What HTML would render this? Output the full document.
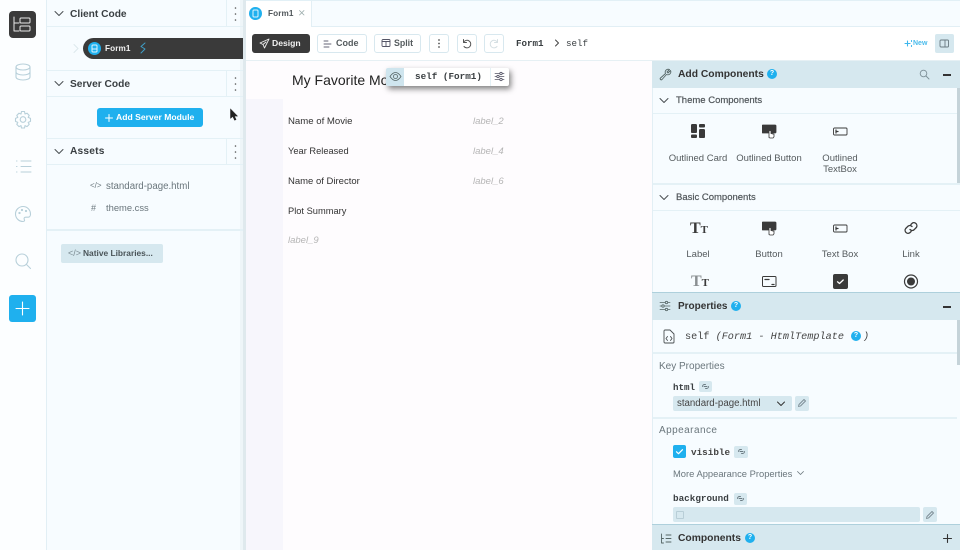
<!DOCTYPE html>
<html><head><meta charset="utf-8">
<style>
html,body{margin:0;padding:0;width:960px;height:550px;overflow:hidden;background:#fff}
body{position:relative;font-family:"Liberation Sans",sans-serif;color:#3a3f42}
.a{position:absolute}
.t{position:absolute;white-space:nowrap;line-height:1}
.b{font-weight:bold}
.m{font-family:"Liberation Mono",monospace}
.r{background:#e4f1f6}
svg{position:absolute;fill:none;stroke-linecap:round;stroke-linejoin:round}
.btn{position:absolute;box-sizing:border-box;border:1.5px solid #d8e8ef;border-radius:3px;background:#fff;height:19px;top:34px}
.ctr{text-align:center;transform:translateX(-50%)}
</style></head><body>

<!-- top line -->
<div class="a" style="left:0;top:0;width:960px;height:1px;background:#e2f0f6"></div>

<!-- left rail -->
<div class="a" style="left:0;top:0;width:46px;height:550px;background:#fcfeff;border-right:1px solid #e2eff5"></div>
<div class="a" style="left:9px;top:11px;width:27px;height:27px;background:#3a3a3a;border-radius:4px"></div>
<svg style="left:9px;top:11px" width="27" height="27" stroke="#e8e8e8" stroke-width="1"><path d="M5 6v14h5M5 12h5"/><rect x="11" y="7" width="10" height="5" rx="1"/><rect x="11" y="15" width="10" height="5" rx="1"/></svg>
<svg style="left:13px;top:62px" width="20" height="20" stroke="#b8d0da" stroke-width="1.100"><ellipse cx="10" cy="5" rx="7" ry="3"/><path d="M3 5v10c0 1.700 3 3 7 3s7-1.300 7-3V5M3 10c0 1.700 3 3 7 3s7-1.300 7-3"/></svg>
<svg style="left:14px;top:110px" width="18" height="19" stroke="#b8d0da" stroke-width="1.100"><circle cx="9" cy="9.500" r="2.800"/><path d="M7.500 1.500h3l.5 2.500 2-.8 2.200 2.200-1 2 2.300 1v3l-2.300 1 1 2-2.200 2.200-2-1-.5 2.400h-3l-.5-2.400-2 1-2.200-2.200 1-2-2.300-1v-3l2.300-1-1-2 2.200-2.200 2 .8z"/></svg>
<svg style="left:15px;top:159px" width="17" height="15" stroke="#b8d0da" stroke-width="1"><path d="M6 2h10M6 7.500h10M6 13h10M1.500 2h.5M1.500 7.500h.5M1.500 13h.5"/></svg>
<svg style="left:14px;top:205px" width="18" height="18" stroke="#b8d0da" stroke-width="1.100"><path d="M9 1.500a7.500 7.500 0 1 0 0 15c1.500 0 1.800-1 1.300-2-.6-1.200 0-2.300 1.400-2.300h2.300c1.300 0 2.500-1 2.500-3C16.500 4.500 13 1.500 9 1.500z"/><circle cx="5.500" cy="8" r=".6"/><circle cx="8" cy="5" r=".6"/><circle cx="12" cy="6" r=".6"/></svg>
<svg style="left:14px;top:252px" width="18" height="18" stroke="#b8d0da" stroke-width="1.100"><circle cx="8" cy="8" r="6"/><path d="M12.500 12.500l4 4"/></svg>
<div class="a" style="left:9px;top:295px;width:27px;height:27px;background:#1fb0ee;border-radius:3px"></div>
<svg style="left:9px;top:295px" width="27" height="27" stroke="#fff" stroke-width="1.100"><path d="M13.500 7v13M7 13.500h13"/></svg>

<!-- left panel -->
<div class="a" style="left:47px;top:0;width:196px;height:550px;background:#f7fcff"></div>
<div class="a" style="left:243px;top:0;width:3px;height:550px;background:#dfe9ed"></div>
<div class="a" style="left:240px;top:0;width:3px;height:550px;background:#eef5f8"></div>

<div class="a r" style="left:47px;top:26px;width:196px;height:1px"></div>
<div class="a r" style="left:47px;top:70px;width:196px;height:1px"></div>
<div class="a r" style="left:47px;top:96px;width:196px;height:1px"></div>
<div class="a r" style="left:47px;top:138px;width:196px;height:1px"></div>
<div class="a r" style="left:47px;top:164px;width:196px;height:1px"></div>
<div class="a" style="left:47px;top:229px;width:196px;height:2px;background:#e4f1f6"></div>
<div class="a r" style="left:226px;top:0;width:1px;height:26px"></div>
<div class="a r" style="left:226px;top:71px;width:1px;height:25px"></div>
<div class="a r" style="left:226px;top:139px;width:1px;height:25px"></div>

<svg style="left:53px;top:9px" width="12" height="9" stroke="#4a4f52" stroke-width="1"><path d="M2 2.500l4 4 4-4"/></svg>
<svg style="left:53px;top:79px" width="12" height="9" stroke="#4a4f52" stroke-width="1"><path d="M2 2.500l4 4 4-4"/></svg>
<svg style="left:53px;top:147px" width="12" height="9" stroke="#4a4f52" stroke-width="1"><path d="M2 2.500l4 4 4-4"/></svg>
<div class="t b" style="left:70px;top:10px;font-size:10.200px">Client Code</div>
<div class="t b" style="left:70px;top:80px;font-size:10.200px">Server Code</div>
<div class="t b" style="left:70px;top:147px;font-size:10.200px;letter-spacing:.2px">Assets</div>
<svg style="left:233px;top:6px" width="5" height="16"><circle cx="2.500" cy="2" r=".8" fill="#555"/><circle cx="2.500" cy="8" r=".8" fill="#555"/><circle cx="2.500" cy="14" r=".8" fill="#555"/></svg>
<svg style="left:233px;top:76px" width="5" height="16"><circle cx="2.500" cy="2" r=".8" fill="#555"/><circle cx="2.500" cy="8" r=".8" fill="#555"/><circle cx="2.500" cy="14" r=".8" fill="#555"/></svg>
<svg style="left:233px;top:144px" width="5" height="16"><circle cx="2.500" cy="2" r=".8" fill="#555"/><circle cx="2.500" cy="8" r=".8" fill="#555"/><circle cx="2.500" cy="14" r=".8" fill="#555"/></svg>

<svg style="left:72px;top:43px" width="8" height="11" stroke="#dde8ec" stroke-width="1"><path d="M2 1.500l4 4-4 4"/></svg>
<div class="a" style="left:83px;top:38px;width:160px;height:21px;background:#3a3a3a;border-radius:11px 0 0 11px"></div>
<div class="a" style="left:88px;top:42px;width:13px;height:13px;background:#1fb0ee;border-radius:50%"></div>
<svg style="left:88px;top:42px" width="13" height="13" stroke="#dff4fd" stroke-width="1"><rect x="4" y="3" width="5" height="7" rx="1"/><path d="M4 7h5"/></svg>
<div class="t b" style="left:105px;top:45px;font-size:8.200px;color:#f2f2f2;letter-spacing:.1px">Form1</div>
<svg style="left:139px;top:42px" width="8" height="12" stroke="#3f9fc8" stroke-width="1"><path d="M6 1L2 4.500 6 7 2 11"/></svg>

<div class="a" style="left:97px;top:108px;width:106px;height:19px;background:#1fb0ee;border-radius:3px"></div>
<svg style="left:104px;top:113px" width="10" height="10" stroke="#fff" stroke-width="1"><path d="M5 1.500v7M1.500 5h7"/></svg>
<div class="t b" style="left:116px;top:113px;font-size:8.600px;color:#fff">Add Server Module</div>
<svg style="left:229px;top:108px" width="10" height="14"><path d="M1.500 1v9.500l2.300-2 1.800 3.800 1.500-.7-1.700-3.500h3z" fill="#222" stroke="#222" stroke-width=".5"/></svg>

<div class="t" style="left:90px;top:182px;font-size:8px;color:#6d7a80">&lt;/&gt;</div>
<div class="t" style="left:106px;top:182px;font-size:9.700px;color:#6a767c">standard-page.html</div>
<div class="t" style="left:91px;top:204px;font-size:9px;color:#6d7a80">#</div>
<div class="t" style="left:106px;top:203px;font-size:9.400px;color:#6a767c">theme.css</div>
<div class="a" style="left:61px;top:244px;width:102px;height:19px;background:#d6e8ef;border-radius:2px"></div>
<div class="t" style="left:68px;top:249px;font-size:9px;color:#7b8b92">&lt;/&gt;</div>
<div class="t b" style="left:83px;top:249px;font-size:8.400px;color:#4a5458">Native Libraries...</div>

<!-- tabs -->
<div class="a" style="left:246px;top:1px;width:714px;height:25px;background:#f7fcff"></div>
<div class="a" style="left:246px;top:26px;width:714px;height:1px;background:#e2eff5"></div>
<div class="a" style="left:246px;top:1px;width:66px;height:26px;background:#fff;border-right:1px solid #e2eff5;box-sizing:border-box"></div>
<div class="a" style="left:249px;top:7px;width:13px;height:13px;background:#1fb0ee;border-radius:50%"></div>
<svg style="left:249px;top:7px" width="13" height="13" stroke="#dff4fd" stroke-width="1"><rect x="4" y="3" width="5" height="7" rx="1"/></svg>
<div class="t b" style="left:268px;top:10px;font-size:8.200px;color:#50565a;letter-spacing:.1px">Form1</div>
<svg style="left:298px;top:9px" width="8" height="8" stroke="#9aa" stroke-width=".8"><path d="M1.500 1.500l4.500 4.500M6 1.500L1.500 6"/></svg>

<!-- toolbar -->
<div class="a" style="left:246px;top:27px;width:714px;height:33px;background:#fff"></div>
<div class="a" style="left:246px;top:60px;width:714px;height:1px;background:#e6f0f4"></div>
<div class="a" style="left:252px;top:34px;width:58px;height:19px;background:#3a3a3a;border-radius:3px"></div>
<svg style="left:259px;top:38px" width="11" height="11" stroke="#eee" stroke-width=".9"><path d="M10 1L1 5l3 1.500L5.500 10 10 1zM4 6.500L7 4"/></svg>
<div class="t b" style="left:272px;top:39px;font-size:8.600px;color:#f2f2f2">Design</div>
<div class="btn" style="left:317px;width:50px"></div>
<svg style="left:323px;top:39px" width="10" height="10" stroke="#667" stroke-width=".9"><path d="M1 2h4M1 5h7M1 8h5"/></svg>
<div class="t b" style="left:336px;top:39px;font-size:9px;color:#555b5e">Code</div>
<div class="btn" style="left:374px;width:47px"></div>
<svg style="left:381px;top:38px" width="10" height="10" stroke="#556" stroke-width=".9"><rect x="1" y="1.500" width="8" height="7" rx="1"/><path d="M1 3.500h8M5 3.500v5"/></svg>
<div class="t b" style="left:394px;top:39px;font-size:8.800px;color:#555b5e">Split</div>
<div class="btn" style="left:429px;width:20px"></div>
<svg style="left:437px;top:38px" width="4" height="11"><circle cx="2" cy="2" r=".9" fill="#555"/><circle cx="2" cy="5.500" r=".9" fill="#555"/><circle cx="2" cy="9" r=".9" fill="#555"/></svg>
<div class="btn" style="left:457px;width:20px"></div>
<svg style="left:461px;top:38px" width="11" height="11" stroke="#555" stroke-width="1"><path d="M2.500 1.500v3h3M2.500 4.500A3.800 3.800 0 1 1 3 8.500"/></svg>
<div class="btn" style="left:484px;width:20px"></div>
<svg style="left:489px;top:38px" width="11" height="11" stroke="#d5dfe3" stroke-width="1"><path d="M8.500 1.500v3h-3M8.500 4.500A3.800 3.800 0 1 0 8 8.500"/></svg>
<div class="t m b" style="left:516px;top:39px;font-size:9.200px;color:#3a3f42">Form1</div>
<svg style="left:554px;top:39px" width="6" height="8" stroke="#444" stroke-width="1"><path d="M1.500 1l3 3-3 3"/></svg>
<div class="t m" style="left:566px;top:39px;font-size:9.200px;color:#3a3f42">self</div>
<svg style="left:904px;top:39px" width="9" height="9" stroke="#3db6ec" stroke-width="1.100"><path d="M1 4.500h5M3.500 2v5M7.500 1.500v1M7.500 6.500v1"/></svg>
<div class="t b" style="left:913px;top:40px;font-size:7px;color:#4bbcec">New</div>
<div class="a" style="left:935px;top:34px;width:19px;height:19px;background:#d6e8ef;border-radius:2px"></div>
<svg style="left:939px;top:39px" width="11" height="9" stroke="#6a7a82" stroke-width=".9"><rect x="1" y="1" width="8.500" height="7" rx="1"/><path d="M6 1v7"/></svg>

<!-- canvas -->
<div class="a" style="left:246px;top:61px;width:406px;height:489px;background:#fefcfe"></div>
<div class="a" style="left:246px;top:99px;width:37px;height:451px;background:#f7f6fc"></div>
<div class="t" style="left:292px;top:73px;font-size:14px;color:#222">My Favorite Mov</div>
<div class="t" style="left:288px;top:117px;font-size:9.600px;color:#333">Name of Movie</div>
<div class="t" style="left:288px;top:147px;font-size:9.300px;color:#333">Year Released</div>
<div class="t" style="left:288px;top:177px;font-size:9.500px;color:#333">Name of Director</div>
<div class="t" style="left:288px;top:207px;font-size:9.300px;color:#333">Plot Summary</div>
<div class="t" style="left:473px;top:117px;font-size:9.500px;font-style:italic;color:#b5b5b5">label_2</div>
<div class="t" style="left:473px;top:147px;font-size:9.500px;font-style:italic;color:#b5b5b5">label_4</div>
<div class="t" style="left:473px;top:177px;font-size:9.500px;font-style:italic;color:#b5b5b5">label_6</div>
<div class="t" style="left:288px;top:236px;font-size:9.500px;font-style:italic;color:#b5b5b5">label_9</div>

<!-- floating toolbar -->
<div class="a" style="left:386px;top:68px;width:123px;height:18px;background:#fff;border-radius:2px;box-shadow:2px 3px 6px rgba(50,50,50,.6)"></div>
<div class="a" style="left:386px;top:68px;width:18px;height:18px;background:#cfe5ee;border-radius:2px 0 0 2px"></div>
<svg style="left:389px;top:71px" width="13" height="11" stroke="#566" stroke-width=".8"><path d="M1 5.500C3 2.500 5 1.500 6.500 1.500S10 2.500 12 5.500C10 8.500 8 9.500 6.500 9.500S3 8.500 1 5.500z"/><circle cx="6.500" cy="5.500" r="2"/></svg>
<div class="t m b" style="left:415px;top:72px;font-size:9.300px;color:#3a3f42">self (Form1)</div>
<div class="a" style="left:490px;top:68px;width:1px;height:18px;background:#e4f1f6"></div>
<svg style="left:494px;top:71px" width="11" height="11" stroke="#556" stroke-width=".8"><path d="M1 2.500h9M1 5.500h9M1 8.500h9"/><circle cx="7" cy="2.500" r="1.200" fill="#fff"/><circle cx="4" cy="5.500" r="1.200" fill="#fff"/><circle cx="7" cy="8.500" r="1.200" fill="#fff"/></svg>

<!-- right panel -->
<div class="a" style="left:652px;top:61px;width:308px;height:489px;background:#f7fcff;border-left:1px solid #e2eff5;box-sizing:border-box"></div>
<div class="a" style="left:652px;top:61px;width:308px;height:27px;background:#d6e8ef"></div>
<svg style="left:659px;top:68px" width="13" height="13" stroke="#566" stroke-width=".9"><path d="M11.500 2.500L9 5 8 4l2.500-2.500a3 3 0 0 0-4 4L1.500 10a1 1 0 0 0 1.500 1.500l4.500-5a3 3 0 0 0 4-4z"/></svg>
<div class="t b" style="left:678px;top:70px;font-size:10.300px;color:#333">Add Components</div>
<div class="a" style="left:767px;top:69px;width:10px;height:10px;border-radius:50%;background:#1fb0ee;color:#fff;font-size:7px;font-weight:bold;line-height:10px;text-align:center">?</div>
<svg style="left:919px;top:69px" width="11" height="11" stroke="#7d8f97" stroke-width=".9"><circle cx="4.500" cy="4.500" r="3.300"/><path d="M7 7l3 3"/></svg>
<div class="a" style="left:943px;top:74px;width:8px;height:1.500px;background:#333"></div>

<svg style="left:658px;top:96px" width="12" height="9" stroke="#4a4f52" stroke-width="1"><path d="M2 2.500l4 4 4-4"/></svg>
<div class="t" style="left:676px;top:96px;font-size:9.500px;color:#50565a;-webkit-text-stroke:.2px #50565a">Theme Components</div>
<div class="a r" style="left:653px;top:113px;width:304px;height:1px"></div>
<div class="a" style="left:957px;top:88px;width:3px;height:95px;background:#c5d3d9"></div>

<!-- theme comps -->
<svg style="left:691px;top:123px" width="15" height="16"><rect x="0" y="1" width="6" height="9" rx="1.300" fill="#3a3a3a"/><rect x="0" y="11.500" width="6" height="3.500" rx="1" fill="#3a3a3a"/><rect x="8" y="1" width="6" height="3.500" rx="1" fill="#3a3a3a"/><rect x="8" y="6" width="6" height="9" rx="1.300" fill="#3a3a3a"/></svg>
<svg style="left:762px;top:124px" width="15" height="15" stroke="#3a3a3a" stroke-width=".8"><rect x="0" y="1" width="14" height="8" rx="1" fill="#3a3a3a"/><path d="M7 13.500V7.500a1 1 0 0 1 2 0v2l3 .7v2.500l-1 1.300H8z" fill="#fff"/></svg>
<svg style="left:833px;top:125px" width="15" height="13" stroke="#3a3a3a" stroke-width=".9"><rect x=".5" y="3" width="13.500" height="7" rx="1"/><path d="M3 5v3M3 6.500h2" stroke-width="1.200"/></svg>
<div class="t ctr" style="left:698px;top:154px;font-size:9.500px;color:#555b5e">Outlined Card</div>
<div class="t ctr" style="left:769px;top:154px;font-size:9.500px;color:#555b5e">Outlined Button</div>
<div class="t ctr" style="left:840px;top:154px;font-size:9.500px;color:#555b5e">Outlined</div>
<div class="t ctr" style="left:840px;top:165px;font-size:9.500px;color:#555b5e">TextBox</div>

<div class="a r" style="left:653px;top:183px;width:307px;height:2px"></div>
<svg style="left:658px;top:193px" width="12" height="9" stroke="#4a4f52" stroke-width="1"><path d="M2 2.500l4 4 4-4"/></svg>
<div class="t" style="left:676px;top:193px;font-size:9.500px;color:#50565a;-webkit-text-stroke:.2px #50565a">Basic Components</div>
<div class="a r" style="left:653px;top:210px;width:307px;height:1px"></div>

<div class="t" style="left:690px;top:221px;font-family:'Liberation Serif',serif;font-size:16px;font-weight:bold;color:#3a3a3a">T<span style="font-size:11px">T</span></div>
<svg style="left:762px;top:221px" width="15" height="15" stroke="#3a3a3a" stroke-width=".8"><rect x="0" y="1" width="14" height="8" rx="1" fill="#3a3a3a"/><path d="M7 13.500V7.500a1 1 0 0 1 2 0v2l3 .7v2.500l-1 1.300H8z" fill="#fff"/></svg>
<svg style="left:833px;top:222px" width="15" height="13" stroke="#3a3a3a" stroke-width=".9"><rect x=".5" y="3" width="13.500" height="7" rx="1"/><path d="M3 5v3M3 6.500h2" stroke-width="1.200"/></svg>
<svg style="left:903px;top:221px" width="16" height="14" stroke="#3a3a3a" stroke-width="1.300"><path d="M7 8.500a3 3 0 0 0 4 .3l2.300-2.300a3 3 0 0 0-4.200-4.200l-1.200 1.200M9 5.500a3 3 0 0 0-4-.3L2.700 7.500a3 3 0 0 0 4.200 4.200l1.200-1.200"/></svg>
<div class="t ctr" style="left:698px;top:250px;font-size:9.500px;color:#555b5e">Label</div>
<div class="t ctr" style="left:769px;top:250px;font-size:9.500px;color:#555b5e">Button</div>
<div class="t ctr" style="left:840px;top:250px;font-size:9.500px;color:#555b5e">Text Box</div>
<div class="t ctr" style="left:911px;top:250px;font-size:9.500px;color:#555b5e">Link</div>

<div class="t" style="left:691px;top:274px;font-family:'Liberation Serif',serif;font-size:16px;font-weight:bold;color:#8a8f92">T<span style="font-size:11px;color:#3a3a3a">T</span></div>
<svg style="left:762px;top:275px" width="15" height="14" stroke="#3a3a3a" stroke-width="1"><rect x=".5" y="1.500" width="13.500" height="10" rx="1"/><path d="M3 4.500h4M10 9.500h2" stroke-width="1.300"/></svg>
<div class="a" style="left:833px;top:274px;width:15px;height:15px;background:#3a3a3a;border-radius:2px"></div>
<svg style="left:833px;top:274px" width="15" height="15" stroke="#fff" stroke-width="1.300"><path d="M4.500 7.800l2 1.700 3.700-3.500"/></svg>
<svg style="left:903px;top:274px" width="16" height="16" stroke="#3a3a3a" stroke-width="1.200"><circle cx="8" cy="7.500" r="6.500"/><circle cx="8" cy="7.500" r="3.400" fill="#3a3a3a"/></svg>

<!-- properties -->
<div class="a" style="left:652px;top:292px;width:308px;height:28px;background:#d6e8ef;border-top:1px solid #aed0dc;box-sizing:border-box"></div>
<svg style="left:659px;top:300px" width="13" height="12" stroke="#566" stroke-width=".8"><path d="M1 2.500h10M1 6h10M1 9.500h10"/><circle cx="7.500" cy="2.500" r="1.200" fill="#d6e8ef"/><circle cx="4" cy="6" r="1.200" fill="#d6e8ef"/><circle cx="7.500" cy="9.500" r="1.200" fill="#d6e8ef"/></svg>
<div class="t b" style="left:678px;top:302px;font-size:10px;color:#333">Properties</div>
<div class="a" style="left:731px;top:301px;width:10px;height:10px;border-radius:50%;background:#1fb0ee;color:#fff;font-size:7px;font-weight:bold;line-height:10px;text-align:center">?</div>
<div class="a" style="left:943px;top:306px;width:8px;height:1.500px;background:#333"></div>

<svg style="left:663px;top:329px" width="12" height="15" stroke="#4a4f52" stroke-width=".9"><path d="M1 2a1 1 0 0 1 1-1h5l4 4v8a1 1 0 0 1-1 1H2a1 1 0 0 1-1-1z"/><path d="M4.500 7.500L3 9.500l1.500 2M7.500 7.500L9 9.500l-1.500 2"/></svg>
<div class="t m" style="left:685px;top:333px;font-size:10.200px;color:#444">self <i>(Form1 - HtmlTemplate</i></div>
<div class="a" style="left:851px;top:331px;width:10px;height:10px;border-radius:50%;background:#1fb0ee;color:#fff;font-size:7px;font-weight:bold;line-height:10px;text-align:center">?</div>
<div class="t m" style="left:863px;top:333px;font-size:10.200px;color:#444"><i>)</i></div>
<div class="a r" style="left:653px;top:352px;width:304px;height:2px"></div>
<div class="a" style="left:957px;top:320px;width:3px;height:45px;background:#c5d3d9"></div>

<div class="t" style="left:659px;top:362px;font-size:10px;color:#6a767c">Key Properties</div>
<div class="t m b" style="left:673px;top:383px;font-size:9.200px;color:#3a3f42">html</div>
<div class="a" style="left:699px;top:381px;width:13px;height:11px;background:#d6e8ef;border-radius:2px"></div>
<svg style="left:701px;top:382px" width="9" height="9" stroke="#6a7a82" stroke-width=".9"><path d="M1.500 4.500a2 2 0 0 1 2-2h1M7.500 4.500a2 2 0 0 1-2 2h-1M3 4.500h3"/></svg>
<div class="a" style="left:673px;top:396px;width:119px;height:15px;background:#d6e8ef;border-radius:2px"></div>
<div class="t" style="left:677px;top:399px;font-size:9.700px;color:#444">standard-page.html</div>
<svg style="left:776px;top:400px" width="10" height="8" stroke="#333" stroke-width="1"><path d="M1.500 2l3.500 3.500L8.500 2"/></svg>
<div class="a" style="left:795px;top:396px;width:14px;height:15px;background:#d6e8ef;border-radius:2px"></div>
<svg style="left:797px;top:398px" width="10" height="10" stroke="#7a8a92" stroke-width=".9"><path d="M1.500 8.500l.5-2L7 1.500l1.500 1.500-5 5z"/></svg>
<div class="a" style="left:653px;top:417px;width:304px;height:2px;background:#e4f1f6"></div>

<div class="t" style="left:659px;top:426px;font-size:10px;color:#6a767c;letter-spacing:.45px">Appearance</div>
<div class="a" style="left:673px;top:445px;width:13px;height:13px;background:#1fb0ee;border-radius:2px"></div>
<svg style="left:673px;top:445px" width="13" height="13" stroke="#fff" stroke-width="1.200"><path d="M3.500 6.800l2 1.900 4-4"/></svg>
<div class="t m b" style="left:691px;top:448px;font-size:9.300px;color:#444">visible</div>
<div class="a" style="left:734px;top:446px;width:14px;height:12px;background:#d6e8ef;border-radius:2px"></div>
<svg style="left:737px;top:447px" width="9" height="9" stroke="#6a7a82" stroke-width=".9"><path d="M1.500 4.500a2 2 0 0 1 2-2h1M7.500 4.500a2 2 0 0 1-2 2h-1M3 4.500h3"/></svg>
<div class="t" style="left:673px;top:469px;font-size:9.400px;color:#6a767c">More Appearance Properties</div>
<svg style="left:796px;top:470px" width="9" height="7" stroke="#6a767c" stroke-width=".8"><path d="M1.500 1.500l3 3 3-3"/></svg>
<div class="t m b" style="left:673px;top:494px;font-size:9.300px;color:#3a3f42">background</div>
<div class="a" style="left:734px;top:493px;width:13px;height:12px;background:#d6e8ef;border-radius:2px"></div>
<svg style="left:736px;top:494px" width="9" height="9" stroke="#6a7a82" stroke-width=".9"><path d="M1.500 4.500a2 2 0 0 1 2-2h1M7.500 4.500a2 2 0 0 1-2 2h-1M3 4.500h3"/></svg>
<div class="a" style="left:673px;top:507px;width:247px;height:15px;background:#d6e8ef;border-radius:2px"></div>
<div class="a" style="left:676px;top:511px;width:6px;height:6px;border:1px solid #b8ced7;border-radius:1px"></div>
<div class="a" style="left:923px;top:507px;width:14px;height:15px;background:#d6e8ef;border-radius:2px"></div>
<svg style="left:925px;top:510px" width="10" height="10" stroke="#7a8a92" stroke-width=".9"><path d="M1.500 8.500l.5-2L7 1.500l1.500 1.500-5 5z"/></svg>

<!-- components -->
<div class="a" style="left:652px;top:524px;width:308px;height:26px;background:#d6e8ef;border-top:1px solid #aed0dc;box-sizing:border-box"></div>
<svg style="left:660px;top:533px" width="12" height="12" stroke="#566" stroke-width=".9"><path d="M1.500 1v9h2M1.500 5.500h2M6 2h5M6 5.500h5M6 9h5"/></svg>
<div class="t b" style="left:678px;top:534px;font-size:10.300px;color:#333">Components</div>
<div class="a" style="left:745px;top:533px;width:10px;height:10px;border-radius:50%;background:#1fb0ee;color:#fff;font-size:7px;font-weight:bold;line-height:10px;text-align:center">?</div>
<svg style="left:942px;top:533px" width="11" height="11" stroke="#333" stroke-width="1.100"><path d="M5.500 1.500v8M1.500 5.500h8"/></svg>

</body></html>
